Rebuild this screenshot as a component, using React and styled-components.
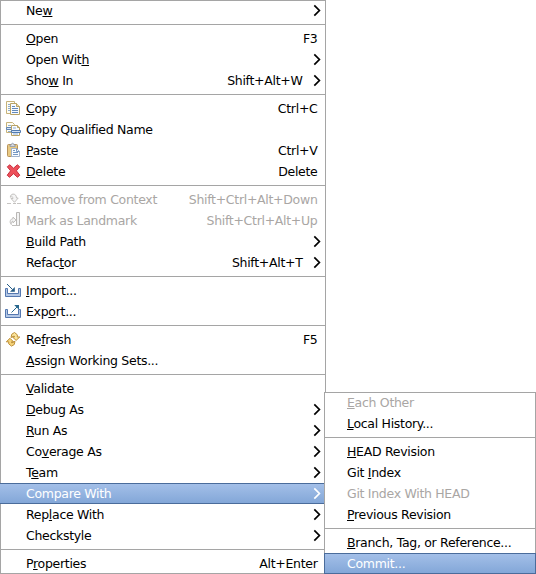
import React from 'react';
import styled, { createGlobalStyle, css } from 'styled-components';

const Global = createGlobalStyle`
  * { box-sizing: border-box; }
  body { margin: 0; background: #fff; overflow: hidden; }
`;

const Screen = styled.main`
  position: relative;
  width: 536px;
  height: 574px;
  background: #fff;
  color: #000;
  font: 12.5px/21px "DejaVu Sans", sans-serif;
  letter-spacing: -0.3px;
  cursor: default;
`;

const Menu = styled.div`
  width: 326px;
  height: 574px;
  border: 1px solid #a5a5a5;
  background: #fff;
`;

const Submenu = styled(Menu)`
  position: absolute;
  left: 324px;
  top: 392px;
  width: 212px;
  height: 182px;
`;

const MenuList = styled.div`
  display: flex;
  flex-direction: column;
  margin: -1px;
`;

const MenuRow = styled.div`
  display: flex;
  align-items: center;
  flex: none;
  height: 21px;
  padding-right: ${p => (p.$arrow ? 4 : 8)}px;
  white-space: pre;
  color: ${p => (p.$disabled ? '#a9a6a4' : '#000')};
  ${p => p.$active && css`
    color: #fff;
    background: linear-gradient(#a3bfe8, #83a7d8);
    border: solid #4a6c9b;
    border-width: 1px ${p.$edged ? 1 : 0}px;
    line-height: 19px;
  `}
`;

const IconSlot = styled.span`
  display: flex;
  flex: none;
  width: ${p => p.$width}px;
  padding: 0 0 1px 5px;
`;

const Label = styled.span`
  flex: 1;
`;

const Mnemonic = styled.span`
  text-decoration: underline 1px;
  text-underline-offset: 1px;
  text-decoration-skip-ink: none;
`;

const Shortcut = styled.span`
  margin-right: ${p => (p.$arrow ? 10.5 : 0.5)}px;
`;

const Separator = styled.div`
  flex: none;
  height: 7px;
  padding: 3px 0;
  background: #a5a5a5 content-box;
`;

const Svg = styled.svg`
  display: block;
  flex: none;
`;

const Arrow = () => (
  <Svg width="9" height="13" viewBox="0 0 9 13" fill="none" stroke="currentColor" strokeWidth="1.7">
    <path d="M1.3 1.4 6.4 6.5 1.3 11.6" />
  </Svg>
);

const drawings = {
  copy: (
    <>
      <path d="M1.5 1.5h8v12h-8z" fill="#fffdf2" stroke="#c6b27a" />
      <path d="M3 4.5h3M3 6.5h3M3 8.5h3M3 10.5h3" stroke="#8fadd0" />
      <path d="M5.5 3.5h6l3 3v8h-9z" fill="#f8fbff" stroke="#b8a266" />
      <path d="M11.5 3.5v3h3" fill="#ecdcab" stroke="#b8a266" />
      <path d="M7 6.5h3M7 8.5h6M7 10.5h6M7 12.5h6" stroke="#6289bb" />
    </>
  ),
  qualified: (
    <>
      <path d="M1.5 1.5h6l2 2v8h-8z" fill="#fffdf2" stroke="#c6b27a" />
      <path d="M3 4.5h3M3 10.5h3" stroke="#8fadd0" />
      <path d="M1.5 6.5h6v2h-6z" fill="#d3e2f4" stroke="#6287b7" />
      <path d="M6.5 4.5h6l2 2v8h-8z" fill="#f8fbff" stroke="#b8a266" />
      <path d="M12.5 4.5v2h2" fill="#ecdcab" stroke="#b8a266" />
      <path d="M8 7h3M8 13h5" stroke="#8fadd0" />
      <path d="M6.5 9.5h9v2h-9z" fill="#d3e2f4" stroke="#527bb0" />
    </>
  ),
  paste: (
    <>
      <rect x="2.5" y="2.5" width="10" height="12" rx="1" fill="#e8c982" stroke="#b8935a" />
      <path d="M5 4.5V3h1.2C6.2.7 9 .7 9 3h1.2v1.5z" fill="#d5d9df" stroke="#8d98a8" strokeWidth=".8" />
      <path d="M6.5 6.5h5l3 3v5h-8z" fill="#fafcff" stroke="#a1b2cb" />
      <path d="M11.5 6.5v3h3M8 8.5h2M8 10.5h5M8 12.5h5" stroke="#7698c3" />
    </>
  ),
  delete: (
    <path d="M2.3 3.8 4.8 1.8 8.5 5.2 12.4 1.8 14.7 3.8 11.4 7.8 14.8 12.2 12.5 14.3 8.5 10.7 4.5 14.3 2.2 12.2 5.6 7.8z" fill="#ed505b" stroke="#c9303e" strokeLinejoin="round" />
  ),
  remove: (
    <>
      <path d="M2 12.5h4M12 12.5h4" stroke="#c6c4c2" />
      <path d="M5.3 6.2C5.5 2 11.5 1.8 11.5 7h1.7L9.5 11.3 6 7.5h2c0-2-1-2-2.7-1.3zM8 12.5h3" fill="#f5f5f5" stroke="#c4c2c0" />
    </>
  ),
  landmark: (
    <>
      <path d="M11.5 13V.5h3v13.5" fill="#f3f3f3" stroke="#b9b7b5" />
      <path d="M6.3 12.5C4 10 5.5 6.7 8 6.7V5l3 3-3 3V9.2c-1.6 0-2 1.5-1.7 3.3zM7 13.5h8" fill="#f3f3f3" stroke="#c1bfbd" />
    </>
  ),
  import: (
    <>
      <path d="M.5 6.5h2v5h11v-5h2v8H.5z" fill="#b4c8e6" stroke="#5578b0" />
      <path d="M2 2l5.5 5.5" stroke="#255b86" />
      <path d="M9.8 5v4.8H5z" fill="#255b86" />
    </>
  ),
  export: (
    <>
      <path d="M.5 6.5h2v5h11v-5h2v8H.5z" fill="#b4c8e6" stroke="#5578b0" />
      <path d="M6.5 9.5 12 4" stroke="#28678d" />
      <path d="M9.2 2H14v4.8z" fill="#28678d" />
    </>
  ),
  refresh: (
    <>
      <path d="M6 6.5 6.8 3.2 9.5 1.5 12.3 3.8V6h2.5l-3.7 3.4L7.5 6h2L9.2 5z" fill="#fae49b" stroke="#bd8e36" strokeLinejoin="round" />
      <path d="M10 10.3 9.2 13.6 6.5 15.1 3.7 12.8v-2H1.3L5 7.3l3.5 3.5h-2l.3 1.2z" fill="#f6d57b" stroke="#bd8e36" strokeLinejoin="round" />
    </>
  ),
};

const Icon = ({ name }) => (
  <Svg width="16" height="16" viewBox="0 0 16 16" fill="none">{drawings[name]}</Svg>
);

const mainItems = [
  { text: 'Ne&w', arrow: true },
  null,
  { text: '&Open', keys: 'F3' },
  { text: 'Open Wit&h', arrow: true },
  { text: 'Sho&w In', keys: 'Shift+Alt+W', arrow: true },
  null,
  { text: '&Copy', keys: 'Ctrl+C', icon: 'copy' },
  { text: 'Copy Qualified Name', icon: 'qualified' },
  { text: '&Paste', keys: 'Ctrl+V', icon: 'paste' },
  { text: '&Delete', keys: 'Delete', icon: 'delete' },
  null,
  { text: 'Remove from Context', keys: 'Shift+Ctrl+Alt+Down', icon: 'remove', disabled: true },
  { text: 'Mark as Landmark', keys: 'Shift+Ctrl+Alt+Up', icon: 'landmark', disabled: true },
  { text: '&Build Path', arrow: true },
  { text: 'Refac&tor', keys: 'Shift+Alt+T', arrow: true },
  null,
  { text: '&Import...', icon: 'import' },
  { text: 'Exp&ort...', icon: 'export' },
  null,
  { text: 'Re&fresh', keys: 'F5', icon: 'refresh' },
  { text: '&Assign Working Sets...' },
  null,
  { text: '&Validate' },
  { text: '&Debug As', arrow: true },
  { text: '&Run As', arrow: true },
  { text: 'Co&verage As', arrow: true },
  { text: 'T&eam', arrow: true },
  { text: 'Compare With', arrow: true, active: true },
  { text: 'Rep&lace With', arrow: true },
  { text: 'Checkstyle', arrow: true },
  null,
  { text: 'P&roperties', keys: 'Alt+Enter' },
];

const compareItems = [
  { text: '&Each Other', disabled: true },
  { text: '&Local History...' },
  null,
  { text: '&HEAD Revision' },
  { text: 'Git &Index' },
  { text: 'Git Index With HEAD', disabled: true },
  { text: '&Previous Revision' },
  null,
  { text: '&Branch, Tag, or Reference...' },
  { text: 'Commit...', active: true, edged: true },
];

function ItemLabel({ text }) {
  const i = text.indexOf('&');
  if (i < 0) return <Label>{text}</Label>;
  return <Label>{text.slice(0, i)}<Mnemonic>{text[i + 1]}</Mnemonic>{text.slice(i + 2)}</Label>;
}

function Items({ items, gutter }) {
  return (
    <MenuList role="menu">
      {items.map((item, i) => item ? (
        <MenuRow key={i} role="menuitem" $arrow={item.arrow} $disabled={item.disabled} $active={item.active} $edged={item.edged}>
          <IconSlot $width={item.edged ? gutter - 1 : gutter}>{item.icon && <Icon name={item.icon} />}</IconSlot>
          <ItemLabel text={item.text} />
          {item.keys && <Shortcut $arrow={item.arrow}>{item.keys}</Shortcut>}
          {item.arrow && <Arrow />}
        </MenuRow>
      ) : <Separator key={i} role="separator" />)}
    </MenuList>
  );
}

export default function App() {
  return (
    <Screen>
      <Global />
      <Menu><Items items={mainItems} gutter={26} /></Menu>
      <Submenu><Items items={compareItems} gutter={23} /></Submenu>
    </Screen>
  );
}
